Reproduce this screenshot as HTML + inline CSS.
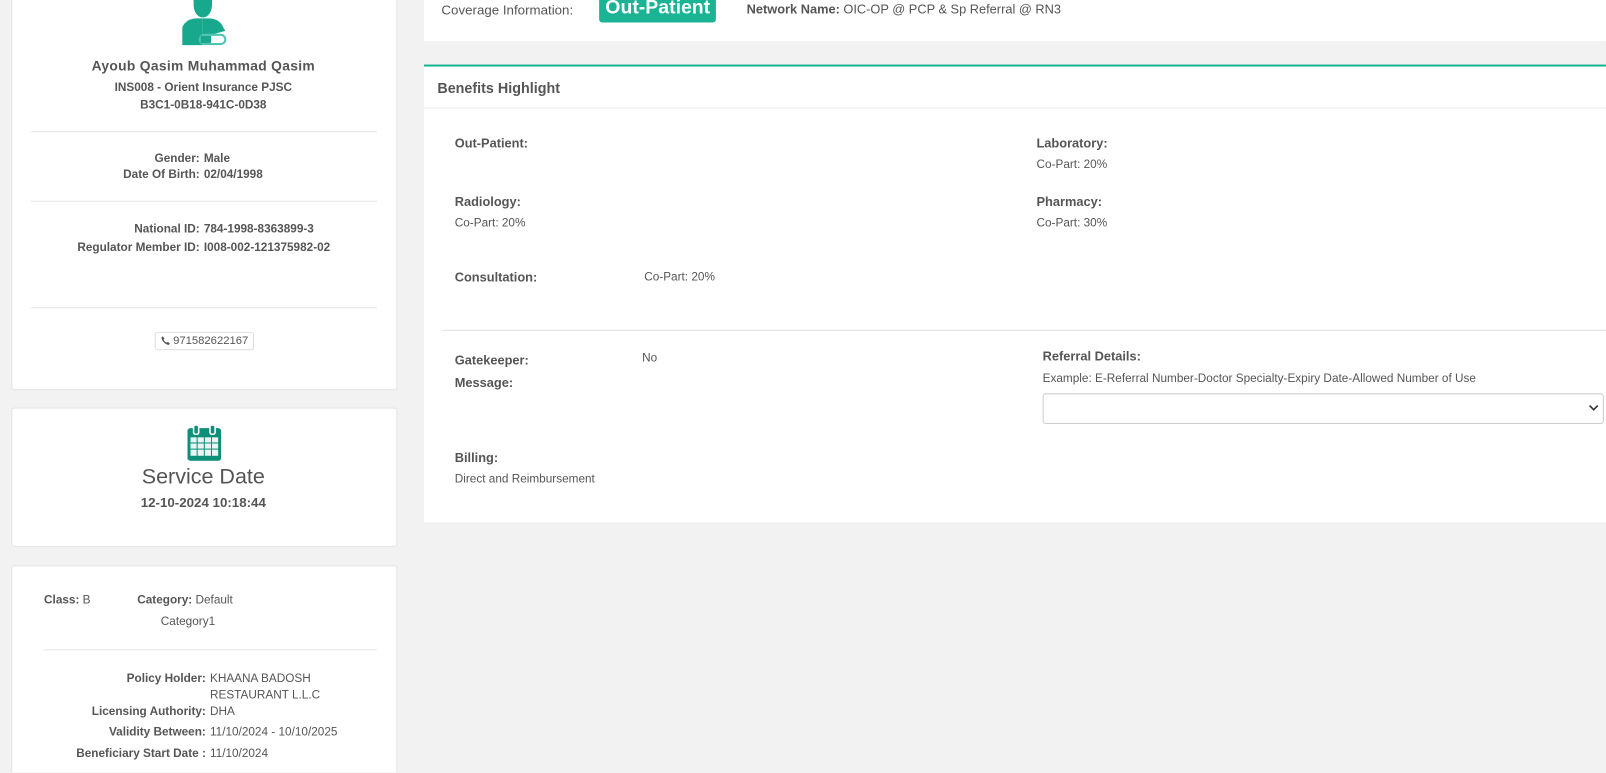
<!DOCTYPE html>
<html><head><style>
html,body{overflow:hidden}
body{margin:0;width:1606px;height:773px;background:#f2f2f2;font-family:"Liberation Sans",Arial,sans-serif;color:#555;font-size:11.5px;position:relative;overflow:hidden}
#w{position:absolute;left:0;top:0;width:1568px;height:754px;overflow:hidden;transform:scale(1.0242);transform-origin:0 0}
.a{position:absolute}
.card{position:absolute;background:#fff;border:1px solid #e3e3e3;border-radius:3px}
b{font-weight:bold}
.c{text-align:center}
hr{position:absolute;border:0;border-top:1px solid #e5e5e5;margin:0}
.r{text-align:right}
.h{font-size:12.5px;font-weight:bold}
</style></head><body><div id="w">
<div class="card" style="left:11px;top:-5px;width:375px;height:384px"></div>
<svg class="a" style="left:176px;top:0" width="48" height="46" viewBox="0 0 48 46"><path d="M13 0h18v4c0 8-4 13-9 13s-9-5-9-13z" fill="#17a88e"/><path d="M2 27c2-6 8-9 14-9h6v26H2z" fill="#17a88e"/><path d="M22 18h6c6 0 12 3 14 9l2 3c-6 2-14 4-22 6z" fill="#17a88e"/><rect x="19" y="34" width="25" height="9" rx="4.5" fill="#fff" stroke="#4fc4b0" stroke-width="2"/><rect x="20" y="35" width="10" height="7" fill="#17a88e"/></svg>
<div class="a c" style="left:11px;width:375px;top:57px;font-size:13.5px;font-weight:bold;letter-spacing:.3px">Ayoub Qasim Muhammad Qasim</div>
<div class="a c" style="left:11px;width:375px;top:78px;font-weight:bold;line-height:17px">INS008 - Orient Insurance PJSC<br>B3C1-0B18-941C-0D38</div>
<hr style="left:30px;width:338px;top:128px">
<div class="a r" style="left:11px;width:184px;top:147px;font-weight:bold;line-height:16px">Gender:<br>Date Of Birth:</div>
<div class="a" style="left:199px;top:147px;font-weight:bold;line-height:16px">Male<br>02/04/1998</div>
<hr style="left:30px;width:338px;top:196px">
<div class="a r" style="left:11px;width:184px;top:215px;font-weight:bold;line-height:18px">National ID:<br>Regulator Member ID:</div>
<div class="a" style="left:199px;top:215px;font-weight:bold;line-height:18px">784-1998-8363899-3<br>I008-002-121375982-02</div>
<hr style="left:30px;width:338px;top:300px">
<div class="a" style="left:151px;top:324px;border:1px solid #ddd;border-radius:3px;padding:2px 5px 2px 5px;font-size:11px;background:#fff"><svg width="9" height="9" viewBox="0 0 10 10" style="vertical-align:-1px;margin-right:3px"><path d="M2 0.5l2 2-1 1.5c.8 1.6 1.8 2.6 3.3 3.3l1.5-1 2 2-1.3 1.5C5 9.5 0.6 5 0.7 1.6z" fill="#555"/></svg>971582622167</div>

<div class="card" style="left:11px;top:398px;width:375px;height:134px"></div>
<svg class="a" style="left:183px;top:415px" width="33" height="35" viewBox="0 0 33 35"><rect x="0" y="3" width="33" height="32" rx="3" fill="#0d8f7a"/><rect x="6" y="0" width="5" height="9" rx="2" fill="#0d8f7a" stroke="#fff" stroke-width="1.5"/><rect x="22" y="0" width="5" height="9" rx="2" fill="#0d8f7a" stroke="#fff" stroke-width="1.5"/><g fill="#e8f5f2"><rect x="3" y="12" width="6" height="5"/><rect x="10" y="12" width="6" height="5"/><rect x="17" y="12" width="6" height="5"/><rect x="24" y="12" width="6" height="5"/><rect x="3" y="18" width="6" height="5"/><rect x="10" y="18" width="6" height="5"/><rect x="17" y="18" width="6" height="5"/><rect x="24" y="18" width="6" height="5"/><rect x="3" y="24" width="6" height="6"/><rect x="10" y="24" width="6" height="6"/><rect x="17" y="24" width="6" height="6"/><rect x="24" y="24" width="6" height="6"/></g></svg>
<div class="a c" style="left:11px;width:375px;top:454px;font-size:21px">Service Date</div>
<div class="a c" style="left:11px;width:375px;top:483px;font-size:13px;font-weight:bold">12-10-2024 10:18:44</div>

<div class="card" style="left:11px;top:552px;width:375px;height:220px"></div>
<div class="a" style="left:43px;top:580px"><b>Class:</b> B</div>
<div class="a" style="left:134px;top:580px"><b>Category:</b> Default</div>
<div class="a" style="left:157px;top:601px">Category1</div>
<hr style="left:42px;width:326px;top:634px">
<div class="a r" style="left:11px;width:190px;top:655px;font-weight:bold;line-height:16px">Policy Holder:<br><br>Licensing Authority:</div>
<div class="a" style="left:205px;top:655px;line-height:16px">KHAANA BADOSH<br>RESTAURANT L.L.C<br>DHA</div>
<div class="a r" style="left:11px;width:190px;top:709px;font-weight:bold">Validity Between:</div>
<div class="a" style="left:205px;top:709px">11/10/2024 - 10/10/2025</div>
<div class="a r" style="left:11px;width:190px;top:730px;font-weight:bold">Beneficiary Start Date :</div>
<div class="a" style="left:205px;top:730px">11/10/2024</div>

<div class="a" style="left:414px;top:0;width:1154px;height:40px;background:#fff"></div>
<div class="a" style="left:431px;top:2px;font-size:13px">Coverage Information:</div>
<div class="a" style="left:585px;top:-6px;background:#1ab394;color:#fff;font-weight:bold;font-size:19px;padding:0 6px;height:28px;line-height:28px;border-radius:3px">Out-Patient</div>
<div class="a" style="left:729px;top:2px;font-size:12.5px"><b>Network Name:</b> OIC-OP @ PCP &amp; Sp Referral @ RN3</div>

<div class="a" style="left:414px;top:63px;width:1154px;height:445px;background:#fff;border-top:2px solid #1ab394"></div>
<div class="a" style="left:414px;top:105px;width:1154px;border-top:1px solid #e7e7e7"></div>
<div class="a" style="left:427px;top:78px;font-size:14px;font-weight:bold">Benefits Highlight</div>
<div class="a h" style="left:444px;top:133px">Out-Patient:</div>
<div class="a h" style="left:1012px;top:133px">Laboratory:</div>
<div class="a" style="left:1012px;top:155px">Co-Part: 20%</div>
<div class="a h" style="left:444px;top:190px">Radiology:</div>
<div class="a" style="left:444px;top:212px">Co-Part: 20%</div>
<div class="a h" style="left:1012px;top:190px">Pharmacy:</div>
<div class="a" style="left:1012px;top:212px">Co-Part: 30%</div>
<div class="a h" style="left:444px;top:264px">Consultation:</div>
<div class="a" style="left:629px;top:265px">Co-Part: 20%</div>
<div class="a" style="left:432px;top:322px;width:1136px;border-top:1px solid #ddd"></div>
<div class="a h" style="left:444px;top:341px;line-height:22px">Gatekeeper:<br>Message:</div>
<div class="a" style="left:627px;top:344px">No</div>
<div class="a h" style="left:1018px;top:341px">Referral Details:</div>
<div class="a" style="left:1018px;top:364px">Example: E-Referral Number-Doctor Specialty-Expiry Date-Allowed Number of Use</div>
<div class="a" style="left:1018px;top:384px;width:546px;height:28px;border:1px solid #ccc;border-radius:3px;background:#fff"></div>
<svg class="a" style="left:1551px;top:394px" width="10" height="8" viewBox="0 0 10 8"><path d="M1 2l4 4 4-4" fill="none" stroke="#333" stroke-width="1.6"/></svg>
<div class="a h" style="left:444px;top:440px">Billing:</div>
<div class="a" style="left:444px;top:462px">Direct and Reimbursement</div>
</div></body></html>
